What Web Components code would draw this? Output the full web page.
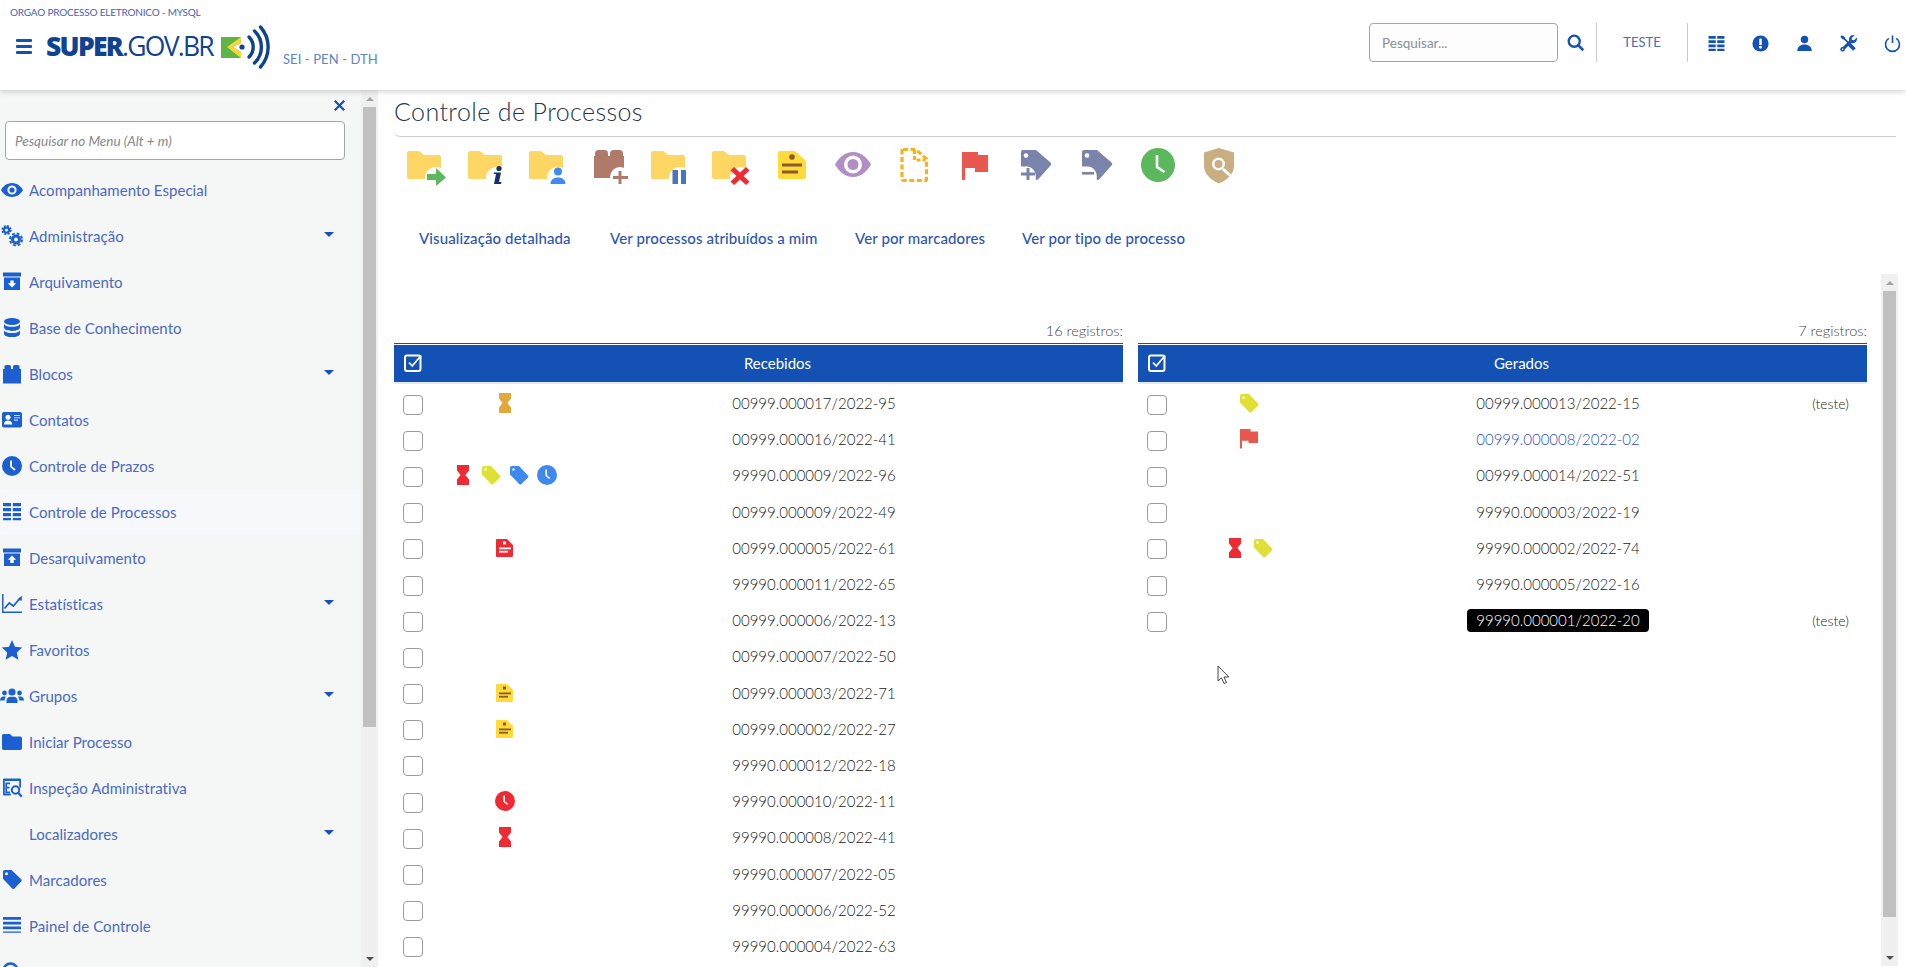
<!DOCTYPE html>
<html lang="pt-BR">
<head>
<meta charset="utf-8">
<title>Controle de Processos</title>
<style>
  html, body { margin: 0; height: 100%; background: #fff; overflow: hidden; }
  body { font-family: Lato, "Liberation Sans", sans-serif; color: #444; }
</style>
</head>
<body>
<app-shell>
  <app-header slot="header"></app-header>
  <app-sidebar slot="sidebar">
    <menu-item icon="eye">Acompanhamento Especial</menu-item>
    <menu-item icon="cogs" caret>Administração</menu-item>
    <menu-item icon="archive-down">Arquivamento</menu-item>
    <menu-item icon="database">Base de Conhecimento</menu-item>
    <menu-item icon="block" caret>Blocos</menu-item>
    <menu-item icon="card">Contatos</menu-item>
    <menu-item icon="clock">Controle de Prazos</menu-item>
    <menu-item icon="table" active>Controle de Processos</menu-item>
    <menu-item icon="archive-up">Desarquivamento</menu-item>
    <menu-item icon="chart" caret>Estatísticas</menu-item>
    <menu-item icon="star">Favoritos</menu-item>
    <menu-item icon="users" caret>Grupos</menu-item>
    <menu-item icon="folder">Iniciar Processo</menu-item>
    <menu-item icon="eq">Inspeção Administrativa</menu-item>
    <menu-item caret>Localizadores</menu-item>
    <menu-item icon="tag">Marcadores</menu-item>
    <menu-item icon="bars">Painel de Controle</menu-item>
    <menu-item icon="search"></menu-item>
  </app-sidebar>
  <main-panel slot="main">
    <process-table heading="Recebidos" total="16 registros:">
      <process-row marks="hour-orange">00999.000017/2022-95</process-row>
      <process-row>00999.000016/2022-41</process-row>
      <process-row marks="hour-red tag-yellow tag-blue clock-blue">99990.000009/2022-96</process-row>
      <process-row>00999.000009/2022-49</process-row>
      <process-row marks="note-red">00999.000005/2022-61</process-row>
      <process-row>99990.000011/2022-65</process-row>
      <process-row>00999.000006/2022-13</process-row>
      <process-row>00999.000007/2022-50</process-row>
      <process-row marks="note-yellow">00999.000003/2022-71</process-row>
      <process-row marks="note-yellow">00999.000002/2022-27</process-row>
      <process-row>99990.000012/2022-18</process-row>
      <process-row marks="clock-red">99990.000010/2022-11</process-row>
      <process-row marks="hour-red">99990.000008/2022-41</process-row>
      <process-row>99990.000007/2022-05</process-row>
      <process-row>99990.000006/2022-52</process-row>
      <process-row>99990.000004/2022-63</process-row>
    </process-table>
    <process-table heading="Gerados" total="7 registros:">
      <process-row marks="tag-yellow" note="(teste)">00999.000013/2022-15</process-row>
      <process-row marks="flag-red" kind="link">00999.000008/2022-02</process-row>
      <process-row>00999.000014/2022-51</process-row>
      <process-row>99990.000003/2022-19</process-row>
      <process-row marks="hour-red tag-yellow">99990.000002/2022-74</process-row>
      <process-row>99990.000005/2022-16</process-row>
      <process-row kind="hover" note="(teste)">99990.000001/2022-20</process-row>
    </process-table>
  </main-panel>
</app-shell>

<script>
// Icones desenhados a mao, todos em viewBox de 24 (menu), 16 (cabecalho) ou 40 (barra de acoes)
const FOLDER = '<path fill="#fdd663" d="M3 3h10l5 4h15a2 2 0 0 1 2 2v20a2 2 0 0 1-2 2H3a2 2 0 0 1-2-2V5a2 2 0 0 1 2-2z"/>';
const HOLE = '<circle cx="30" cy="30" r="11" fill="#fff"/>';
const TAG = c => `<path fill="${c}" d="M1 3a2 2 0 0 1 2-2h7l9 9.4a1.6 1.6 0 0 1 0 2.2L12.4 19a1.6 1.6 0 0 1-2.2 0L1 9.4z"/><circle cx="4.5" cy="4.5" r="1.2" fill="#fff"/>`;
const HOUR = c => `<path fill="${c}" d="M4 0h12v5.5L12.4 10 16 14.5V20H4v-5.5L7.6 10 4 5.5z"/>`;
const CLOCK = c => `<circle cx="10" cy="10" r="10" fill="${c}"/><path fill="none" stroke="#fff" stroke-width="1.6" d="M9.2 4.5v6l3.6 3"/>`;
const NOTE = (c, l) => `<path fill="${c}" d="M2 1h10l6 6v10.5a1.5 1.5 0 0 1-1.5 1.5h-15A1.5 1.5 0 0 1 1 17.5V2a1 1 0 0 1 1-1z"/><rect x="8" y="3.5" width="3" height="3" fill="${l}"/><rect x="4" y="9.5" width="12" height="1.8" fill="${l}"/><rect x="4" y="12.8" width="9" height="1.8" fill="${l}"/>`;
const TAGBODY = '<path fill="#7c83ab" d="M7 2h13l14.500 12.500a2 2 0 0 1 0 3L22 31.500c-1 .8-2.800.3-2.300-1 1-6-3-12-9-12H5V4a2 2 0 0 1 2-2z"/><circle cx="10" cy="7.500" r="2.300" fill="#fff"/>';

const ICONS = {
  // menu lateral
  eye: [24, '<path fill-rule="evenodd" fill="currentColor" d="M12 5C6.5 5 2.6 8.8 1 12c1.6 3.2 5.5 7 11 7s9.4-3.800 11-7c-1.600-3.200-5.500-7-11-7zm0 2.400a4.600 4.600 0 1 1 0 9.200 4.600 4.600 0 0 1 0-9.200z"/><circle cx="12" cy="12" r="2.600" fill="currentColor"/>'],
  cogs: [24, '<circle cx="6.500" cy="6" r="2.600" fill="none" stroke="currentColor" stroke-width="2.200"/><circle cx="6.500" cy="6" r="4.300" fill="none" stroke="currentColor" stroke-width="1.600" stroke-dasharray="2 1.380"/><circle cx="16" cy="15.500" r="3.500" fill="none" stroke="currentColor" stroke-width="3"/><circle cx="16" cy="15.500" r="6" fill="none" stroke="currentColor" stroke-width="2" stroke-dasharray="2.800 1.910"/>'],
  'archive-down': [24, `<rect x="3" y="2.500" width="18" height="4" fill="currentColor"/><rect x="4" y="7.500" width="16" height="12.500" fill="currentColor"/><path fill="#fff" d="M12 17.500 7.800 13.200h2.500V10.500h3.400v2.700h2.500z"/>`],
  'archive-up': [24, `<rect x="3" y="2.500" width="18" height="4" fill="currentColor"/><rect x="4" y="7.500" width="16" height="12.500" fill="currentColor"/><path fill="#fff" d="M12 9.500 7.800 13.800h2.500v3.200h3.400v-3.200h2.500z"/>`],
  database: [24, '<ellipse cx="12" cy="5.500" rx="8" ry="3.400" fill="currentColor"/><path fill="currentColor" d="M4 8.200c1.500 1.800 4.500 2.600 8 2.600s6.500-.8 8-2.600v3.300c0 1.900-3.600 3.400-8 3.400s-8-1.500-8-3.400z"/><path fill="currentColor" d="M4 14.400c1.500 1.800 4.500 2.600 8 2.600s6.500-.8 8-2.600v3.300c0 1.900-3.600 3.400-8 3.400s-8-1.500-8-3.400z"/>'],
  block: [24, '<rect x="3" y="7" width="18" height="14.500" fill="currentColor"/><rect x="4.500" y="3" width="6.500" height="6" rx="1.600" fill="currentColor"/><rect x="13" y="3" width="6.500" height="6" rx="1.600" fill="currentColor"/>'],
  card: [24, '<rect x="2" y="4" width="20" height="15.500" rx="1.800" fill="currentColor"/><circle cx="8" cy="9.300" r="2.500" fill="#fff"/><path fill="#fff" d="M3.800 16.500c0-2.500 1.900-4 4.200-4s4.200 1.500 4.200 4z"/><path stroke="#fff" stroke-opacity=".75" stroke-width="1.100" d="M14 7.500h6M14 9.800h6M14 12.100h4"/>'],
  clock: [24, '<circle cx="12" cy="12" r="10" fill="currentColor"/><path fill="none" stroke="#fff" stroke-width="1.800" d="M11 6.500v6.200l4 3.300"/>'],
  table: [24, '<path fill="currentColor" d="M3 3h8v3.200H3zM12.800 3H21v3.200h-8.200zM3 8h8v3.200H3zM12.800 8H21v3.200h-8.200zM3 13h8v3.200H3zM12.800 13H21v3.200h-8.200zM3 18h8v2.200H3zM12.800 18H21v2.200h-8.200z"/>'],
  chart: [24, '<path fill="none" stroke="currentColor" stroke-width="1.500" d="M2.800 2v18.300H22"/><path fill="none" stroke="currentColor" stroke-width="1.700" d="M4.500 16.500l4.800-5.500 4 3 7.500-8.500"/><path fill="currentColor" d="M21.800 3.800v5l-4.600-1z"/>'],
  star: [24, '<path fill="currentColor" d="M12 2l3 6.800 7.200.8-5.400 4.900 1.600 7.200L12 18l-6.400 3.700 1.600-7.200L1.800 9.600 9 8.800z"/>'],
  users: [24, '<circle cx="12" cy="8" r="3.600" fill="currentColor"/><circle cx="4.500" cy="9" r="2.400" fill="currentColor"/><circle cx="19.500" cy="9" r="2.400" fill="currentColor"/><path fill="currentColor" d="M6.500 19v-2.500c0-2.200 1.900-3.800 3.800-3.800h3.400c1.900 0 3.800 1.600 3.800 3.800V19z"/><path fill="currentColor" d="M0 16.500c0-2.500 1.600-4 3.500-4h2l.5.300c-1 1-1.300 2-1.300 3.700zM24 16.500c0-2.500-1.600-4-3.500-4h-2l-.5.300c1 1 1.300 2 1.300 3.700z"/>'],
  folder: [24, '<path fill="currentColor" d="M3.500 4H10l2.500 2.500h8A1.800 1.800 0 0 1 22 8.300v10a1.800 1.800 0 0 1-1.800 1.800H3.800A1.800 1.800 0 0 1 2 18.300V5.500A1.500 1.500 0 0 1 3.500 4z"/>'],
  eq: [24, '<path fill-rule="evenodd" fill="currentColor" d="M4 2.500h16a1 1 0 0 1 1 1v8h-1.800V5H4.800v12.500h6v2H4a1 1 0 0 1-1-1v-15a1 1 0 0 1 1-1z"/><path stroke="currentColor" stroke-width="1.700" fill="none" d="M10 7.300H6.200v9H10M6.200 11.700h3.300"/><circle cx="15.500" cy="14" r="3.700" fill="none" stroke="currentColor" stroke-width="2"/><path stroke="currentColor" stroke-width="2.200" d="M18.200 16.800l3.600 4"/>'],
  tag: [24, '<path fill="currentColor" d="M3 3.800A1.800 1.800 0 0 1 4.800 2h6.700l9.700 9.300a1.600 1.600 0 0 1 0 2.300l-6.700 6.800a1.600 1.600 0 0 1-2.300 0L3 10.800z"/><circle cx="6.500" cy="5.700" r="1.500" fill="#f5f7f7"/>'],
  bars: [24, '<path fill="currentColor" d="M3 3h18v2.700H3zM3 7.800h18v2.700H3zM3 12.600h18v2.700H3zM3 17.500h18v1.300H3z"/>'],
  search: [24, '<circle cx="10.500" cy="10.500" r="7" fill="none" stroke="currentColor" stroke-width="2.600"/><path stroke="currentColor" stroke-width="3" d="M15.500 15.500l6 6"/>'],
  // cabecalho
  power: [16, '<path fill="none" stroke="currentColor" stroke-width="1.500" d="M4.500 3.200a6.600 6.600 0 1 0 7 0M8 .5v7"/>'],
  alert: [16, '<circle cx="8" cy="8" r="7.600" fill="currentColor"/><rect x="6.800" y="3.400" width="2.400" height="6" rx=".8" fill="#fff"/><circle cx="8" cy="11.500" r="1.400" fill="#fff"/>'],
  user: [16, '<circle cx="8" cy="4.300" r="3.500" fill="currentColor"/><path fill="currentColor" d="M1.200 15c0-3.800 2.800-6 6.800-6s6.800 2.200 6.800 6z"/>'],
  tools: [16, '<path fill="none" stroke="currentColor" stroke-width="1.600" d="M2 1.500 8 7.500"/><path fill="currentColor" d="M.3 1.700 1.800.3 4.800 2.300 3.800 4 2.300 3.900z"/><path fill="none" stroke="currentColor" stroke-width="3.400" d="M8.800 8.800l4.800 4.800"/><path fill="none" stroke="currentColor" stroke-width="2.800" d="M2.500 13.500l7.500-7.500"/><circle cx="2.500" cy="13.500" r="2.200" fill="currentColor"/><circle cx="2.500" cy="13.500" r=".8" fill="#fff"/><path fill="currentColor" d="M8.400 4.600A4.200 4.200 0 0 1 13.700.2l-2.700 2.600.3 1.900 1.900.3L15.800 2.300A4.200 4.200 0 0 1 11 7.700z"/>'],
  grid: [16, '<path fill="currentColor" d="M.500 1h6.800v2.500H.500zM8.700 1h6.800v2.500H8.700zM.500 5h6.800v2.500H.500zM8.700 5h6.800v2.500H8.700zM.500 9h6.800v2.500H.500zM8.700 9h6.800v2.500H8.700zM.500 13h6.800v2H.500zM8.700 13h6.800v2H8.700z"/>'],
  magnifier: [16, '<circle cx="6.800" cy="6.800" r="5.200" fill="none" stroke="currentColor" stroke-width="2.200"/><path stroke="currentColor" stroke-width="2.400" d="M10.500 10.500l4.800 4.800"/>'],
  // barra de acoes
  'a-send': [40, FOLDER + HOLE + '<path fill="#5cb85c" d="M21 26h9v-6l10 9.500L30 38v-6h-9z"/>'],
  'a-info': [40, FOLDER + HOLE + '<circle cx="32" cy="20.500" r="2.600" fill="#15306e"/><path fill="#15306e" d="M27 24.500h7l-2 9.500h2.500l-.5 2h-7l2-10h-2.500z"/>'],
  'a-user': [40, FOLDER + HOLE + '<circle cx="30" cy="23.500" r="4" fill="#3f8bf0"/><path fill="#3f8bf0" d="M22.500 36c0-4 3-6.500 7.500-6.500s7.500 2.500 7.500 6.500z"/>'],
  'a-block': [40, '<rect x="5" y="8" width="30" height="22" fill="#b07a6b"/><rect x="6" y="2" width="13" height="10" rx="3.500" fill="#b07a6b"/><rect x="21" y="2" width="13" height="10" rx="3.500" fill="#b07a6b"/><circle cx="31" cy="29" r="10" fill="#fff"/><path fill="#b07a6b" d="M29.500 23h3v5h6.500v3h-6.500v5h-3v-5H24v-3h5.500z"/>'],
  'a-pause': [40, FOLDER + HOLE + '<rect x="22.500" y="22" width="5.500" height="14" fill="#4a74bc"/><rect x="31" y="22" width="5" height="14" fill="#4a74bc"/>'],
  'a-close': [40, FOLDER + HOLE + '<path fill="#ee2a32" d="M23 21l6 5.500L35 21l3.500 3.500-6 5.500 6 5.500L35 39l-6-5.500L23 39l-3.500-3.500 6-5.500-6-5.500z" transform="translate(0 -2)"/>'],
  'a-note': [40, '<path fill="#fedb3a" d="M8 3h15l11 10v16a2 2 0 0 1-2 2H8a2 2 0 0 1-2-2V5a2 2 0 0 1 2-2z"/><circle cx="20" cy="9" r="2.800" fill="#8a5a2b"/><rect x="10" y="15.500" width="20" height="3" fill="#8a5a2b"/><rect x="10" y="22.500" width="16" height="3" fill="#8a5a2b"/>'],
  'a-eye': [40, '<path fill="#b18fc6" d="M20 4C11 4 5 11 2 16.500 5 22 11 29 20 29s15-7 18-12.500C35 11 29 4 20 4z"/><circle cx="20" cy="16.500" r="9" fill="#fff"/><circle cx="20" cy="16.500" r="5.500" fill="#b18fc6"/>'],
  'a-dashed': [40, '<path fill="none" stroke="#f5b21e" stroke-width="3.200" stroke-dasharray="5 2.500" d="M9 1.500h13l10.500 9.500v20a1.500 1.500 0 0 1-1.500 1.500H9.500A1.500 1.500 0 0 1 8 31V2.500z"/><path fill="none" stroke="#f5b21e" stroke-width="3.200" stroke-dasharray="4 2" d="M20.500 2v10h11"/>'],
  'a-flag': [40, '<path fill="#e8584f" d="M7 4h3.200v28H7z"/><path fill="#e8584f" d="M7 4h16v3h10v17H20v-4H7z"/>'],
  'a-tagplus': [40, TAGBODY + '<path fill="#7c83ab" d="M10.500 20h3v4.500H19v3h-5.500V32h-3v-4.500H5v-3h5.500z"/>'],
  'a-tagminus': [40, TAGBODY + '<rect x="5" y="24" width="12" height="2.600" fill="#7c83ab"/>'],
  'a-clock': [40, '<circle cx="20" cy="17" r="17" fill="#5cb85c"/><path fill="none" stroke="#fff" stroke-width="2.600" d="M19 7v12l7.500 5"/>'],
  'a-shield': [40, '<path fill="#c9ae82" d="M20 0l15 4.500v13c0 8-6 14-15 18C11 31.500 5 25.500 5 17.500v-13z"/><circle cx="19.500" cy="16" r="6.500" fill="#fff"/><circle cx="19.500" cy="16" r="4" fill="#c9ae82"/><path stroke="#fff" stroke-width="3" d="M24 21l7 6.500"/>'],
  // marcas das linhas
  'hour-orange': [20, HOUR('#e3a73a')],
  'hour-red': [20, HOUR('#ef2a33')],
  'tag-yellow': [20, TAG('#dfdf35')],
  'tag-blue': [20, TAG('#3f88ee')],
  'clock-blue': [20, CLOCK('#3f88ee')],
  'clock-red': [20, CLOCK('#ef2a33')],
  'note-red': [20, NOTE('#ef2a33', '#fff')],
  'note-yellow': [20, NOTE('#fedb3a', '#8a5a2b')],
  'flag-red': [20, '<path fill="#e8584f" d="M1 0h2v19.500H1z"/><path fill="#e8584f" d="M1 0h10.500v2.500H19V14H9.500v-2.200H1z"/>'],
  check: [18, '<rect x="1" y="1.500" width="15.500" height="15.500" rx="2" fill="none" stroke="#fff" stroke-width="2"/><path fill="none" stroke="#fff" stroke-width="1.800" d="M5 8.500l3.200 3.500L17.200 1.500"/>']
};

class SeiIcon extends HTMLElement {
  connectedCallback() {
    const name = this.getAttribute('name');
    const size = this.getAttribute('size') || 24;
    const [box, body] = ICONS[name] || [24, ''];
    this.attachShadow({ mode: 'open' }).innerHTML = `
      <style>
        :host { display: block; width: ${size}px; height: ${size}px; flex: none; }
        svg { display: block; overflow: visible; }
      </style>
      <svg width="${size}" height="${size}" viewBox="0 0 ${box} ${box}" aria-hidden="true">${body}</svg>`;
  }
}
customElements.define('sei-icon', SeiIcon);

class AppShell extends HTMLElement {
  constructor() {
    super();
    this.attachShadow({ mode: 'open' }).innerHTML = `
      <style>
        :host {
          display: grid;
          grid-template: 90px 877px / 378px 1fr;
          height: 967px;
          overflow: hidden;
        }
        ::slotted([slot=header]) { grid-column: 1 / 3; }
      </style>
      <slot name="header"></slot>
      <slot name="sidebar"></slot>
      <slot name="main"></slot>`;
  }
}
customElements.define('app-shell', AppShell);

class AppHeader extends HTMLElement {
  constructor() {
    super();
    this.attachShadow({ mode: 'open' }).innerHTML = `
      <style>
        :host {
          display: flex;
          justify-content: space-between;
          background: #fff;
          box-shadow: 0 1px 6px rgba(0,0,0,.22);
          position: relative;
          z-index: 2;
          color: #1351b4;
        }
        .left { padding: 6px 0 0 10px; }
        .org { font-size: 10px; line-height: 13px; color: #4a5eb2; letter-spacing: -.2px; }
        .brand { display: flex; margin-top: 6px; }
        .menu { width: 16px; margin: 14px 14px 0 6px; }
        .menu i { display: block; height: 2.500px; margin-bottom: 3.500px; background: #1351b4; border-radius: 1px; }
        .logo {
          display: flex; align-items: center; height: 43px;
          font: 400 26.5px/1 "Open Sans", sans-serif;
          color: #0f4391; letter-spacing: -1.750px;
        }
        .logo b { font-weight: 800; letter-spacing: -1.700px; }
        .logo svg { margin-left: 8px; }
        .sub { font-size: 13px; color: #5a86c8; margin: 26px 0 0 12px; letter-spacing: .1px; }
        .right { display: flex; align-items: flex-start; padding-top: 23px; }
        .search {
          box-sizing: border-box; width: 189px; height: 39px; margin: 0;
          border: 1px solid #a5a5a5; border-radius: 4px; background: #fdfdfd;
          font: 400 13.500px "Lato", sans-serif; padding: 0 12px;
        }
        .search::placeholder { color: #8a8f98; }
        .go { margin: 11px 12px 0 9px; }
        .user {
          width: 92px; height: 39px; box-sizing: border-box;
          border: solid #c9c9c9; border-width: 0 1px;
          text-align: center; font-size: 13px; line-height: 38px; color: #4a6cb8;
        }
        .tools { display: flex; gap: 27px; padding: 12px 5px 0 20px; }
      </style>
      <div class="left">
        <div class="org">ORGAO PROCESSO ELETRONICO - MYSQL</div>
        <div class="brand">
          <div class="menu"><i></i><i></i><i></i></div>
          <div class="logo"><b>SUPER</b>.GOV.BR
            <svg width="50" height="44" viewBox="0 0 50 44" aria-hidden="true">
              <path fill="#5cb544" d="M0 12h20v6l-8 4 8 5v6H0z"/>
              <path fill="#f5d63d" d="M20 12v6l-8 4 8 5v6l-14-11z"/>
              <circle cx="21" cy="22" r="2.600" fill="#0f4391"/>
              <g fill="none" stroke="#0f4391" stroke-width="3.400" stroke-linecap="round">
                <path d="M28 12a14 14 0 0 1 0 20"/>
                <path d="M33.500 6a22 22 0 0 1 0 32"/>
                <path d="M39.500 2a30 30 0 0 1 0 40"/>
              </g>
            </svg>
          </div>
          <div class="sub">SEI - PEN - DTH</div>
        </div>
      </div>
      <div class="right">
        <input class="search" placeholder="Pesquisar...">
        <sei-icon class="go" name="magnifier" size="17"></sei-icon>
        <div class="user">TESTE</div>
        <div class="tools">
          <sei-icon name="grid" size="17"></sei-icon>
          <sei-icon name="alert" size="17"></sei-icon>
          <sei-icon name="user" size="17"></sei-icon>
          <sei-icon name="tools" size="17"></sei-icon>
          <sei-icon name="power" size="17"></sei-icon>
        </div>
      </div>`;
  }
}
customElements.define('app-header', AppHeader);

class FakeScrollbar extends HTMLElement {
  constructor() {
    super();
    this.attachShadow({ mode: 'open' }).innerHTML = `
      <style>
        :host {
          display: flex; flex-direction: column; align-items: center;
          width: 17px; background: #f0f0f0; flex: none; box-sizing: border-box;
        }
        .up, .down { height: 17px; flex: none; display: flex; align-items: center; justify-content: center; }
        .up i { border: solid transparent; border-width: 0 4px 4px; border-bottom-color: #a3a3a3; }
        .down i { border: solid transparent; border-width: 4px 4px 0; border-top-color: #505050; }
        .thumb { width: 13px; background: #c0c0c0; height: var(--thumb, 300px); }
        .fill { flex: 1; }
      </style>
      <div class="up"><i></i></div>
      <div class="thumb"></div>
      <div class="fill"></div>
      <div class="down"><i></i></div>`;
  }
}
customElements.define('fake-scrollbar', FakeScrollbar);

class AppSidebar extends HTMLElement {
  constructor() {
    super();
    this.attachShadow({ mode: 'open' }).innerHTML = `
      <style>
        :host {
          display: flex; background: #f5f7f7; overflow: hidden;
          color: #1b5fd0; --thumb: 620px;
        }
        .col { width: 361px; flex: none; overflow: hidden; position: relative; }
        .close { display: flex; justify-content: flex-end; height: 31px; padding: 10px 16px 0 0; box-sizing: border-box; }
        .close svg { display: block; }
        .find {
          display: block; box-sizing: border-box; width: 340px; height: 39px; margin: 0 0 7px 5px;
          border: 1px solid #a5a5a5; border-radius: 4px; background: #fff; padding: 0 9px;
          font: italic 400 13.500px "Lato", sans-serif;
        }
        .find::placeholder { color: #85878a; }
        fake-scrollbar { height: 877px; }
      </style>
      <div class="col">
        <div class="close">
          <svg width="11" height="11" viewBox="0 0 11 11"><path stroke="#1b4fa8" stroke-width="2.200" d="M.8.8l9.400 9.400M10.200.8.8 10.200"/></svg>
        </div>
        <input class="find" placeholder="Pesquisar no Menu (Alt + m)">
        <slot></slot>
      </div>
      <fake-scrollbar></fake-scrollbar>`;
  }
}
customElements.define('app-sidebar', AppSidebar);

class MenuItem extends HTMLElement {
  connectedCallback() {
    const icon = this.getAttribute('icon');
    const active = this.hasAttribute('active');
    this.attachShadow({ mode: 'open' }).innerHTML = `
      <style>
        :host {
          display: flex; align-items: center; height: 46px; box-sizing: border-box;
          color: #1b5fd0;
          ${active ? 'background: #f6f8fb; border-radius: 4px;' : ''}
        }
        .ico { width: 24px; margin-right: 5px; flex: none; height: 24px; }
        .txt { flex: 1; font-size: 15px; color: #4a69c6; letter-spacing: .05px; }
        .caret {
          width: 0; height: 0; margin: 0 27px 4px 0;
          border: solid transparent; border-width: 5px 5.500px 0; border-top-color: #1b4fc0;
        }
      </style>
      <div class="ico">${icon ? `<sei-icon name="${icon}" size="24"></sei-icon>` : ''}</div>
      <div class="txt"><slot></slot></div>
      ${this.hasAttribute('caret') ? '<div class="caret"></div>' : ''}`;
  }
}
customElements.define('menu-item', MenuItem);

class ActionBar extends HTMLElement {
  constructor() {
    super();
    const names = ['send', 'info', 'user', 'block', 'pause', 'close', 'note', 'eye', 'dashed', 'flag', 'tagplus', 'tagminus', 'clock', 'shield'];
    this.attachShadow({ mode: 'open' }).innerHTML = `
      <style>
        :host { display: flex; padding-left: 1px; height: 40px; }
        a { display: flex; width: 61px; justify-content: center; }
      </style>
      ${names.map(n => `<a><sei-icon name="a-${n}" size="40"></sei-icon></a>`).join('')}`;
  }
}
customElements.define('action-bar', ActionBar);

class ViewTabs extends HTMLElement {
  constructor() {
    super();
    this.attachShadow({ mode: 'open' }).innerHTML = `
      <style>
        :host {
          display: grid; grid-template-columns: 191px 245px 167px auto; justify-content: start;
          padding-left: 25px; font-size: 15px; line-height: 18px; color: #2b55b5; font-weight: 500;
          letter-spacing: .1px; margin-top: -1px;
        }
      </style>
      <span>Visualização detalhada</span>
      <span>Ver processos atribuídos a mim</span>
      <span>Ver por marcadores</span>
      <span>Ver por tipo de processo</span>`;
  }
}
customElements.define('view-tabs', ViewTabs);

class MainPanel extends HTMLElement {
  constructor() {
    super();
    this.attachShadow({ mode: 'open' }).innerHTML = `
      <style>
        :host { display: flex; flex-direction: column; height: 877px; overflow: hidden; background: #fff; }
        .head { padding: 0 10px 0 16px; }
        h1 {
          margin: 0; font-weight: 300; font-size: 25px; line-height: 43px; height: 47px;
          color: #26364a; box-sizing: border-box; border-bottom: 1px solid #cfcfcf; border-radius: 0 0 0 6px;
          letter-spacing: .4px;
        }
        action-bar { margin-top: 11px; }
        view-tabs { margin-top: 41px; }
        .body { flex: 1; display: flex; min-height: 0; margin-top: 27px; position: relative; --thumb: 626px; }
        .tables { flex: none; width: 1503px; padding: 48px 0 0 16px; box-sizing: border-box; display: grid; grid-template-columns: 729px 729px; column-gap: 15px; align-items: start; }
        fake-scrollbar { height: 692px; }
        .cursor { position: absolute; left: 839px; top: 391px; }
      </style>
      <div class="head">
        <h1>Controle de Processos</h1>
        <action-bar></action-bar>
        <view-tabs></view-tabs>
      </div>
      <div class="body">
        <div class="tables"><slot></slot></div>
        <fake-scrollbar></fake-scrollbar>
        <svg class="cursor" width="14" height="20" viewBox="0 0 14 20"><path fill="#fff" stroke="#333" stroke-width=".9" d="M1 1v15l3.500-3.200 2.500 5.700 2.500-1-2.500-5.500h4.800z"/></svg>
      </div>`;
  }
}
customElements.define('main-panel', MainPanel);

class ProcessTable extends HTMLElement {
  connectedCallback() {
    this.attachShadow({ mode: 'open' }).innerHTML = `
      <style>
        :host { display: block; }
        .total { text-align: right; font-size: 14.500px; line-height: 18px; color: #444; font-weight: 300; }
        .rule { margin-top: 3px; border-top: 1.500px solid #3f5a00; padding-top: .5px; }
        .bar {
          display: grid; grid-template-columns: 38px 1fr; align-items: center;
          height: 37px; background: #1351b4; border-bottom: 2px solid #e4eaf4; color: #fff; box-sizing: content-box;
        }
        .bar sei-icon { margin-left: 10px; }
        .bar span { text-align: center; font-size: 15px; }
        .rows { padding-top: 3px; }
      </style>
      <div class="total">${this.getAttribute('total')}</div>
      <div class="rule">
        <div class="bar"><sei-icon name="check" size="18"></sei-icon><span>${this.getAttribute('heading')}</span></div>
      </div>
      <div class="rows"><slot></slot></div>`;
  }
}
customElements.define('process-table', ProcessTable);

class ProcessRow extends HTMLElement {
  connectedCallback() {
    const marks = (this.getAttribute('marks') || '').split(' ').filter(Boolean);
    const kind = this.getAttribute('kind');
    const numStyle = kind === 'link' ? 'color:#2b4fc0;'
      : kind === 'hover' ? 'color:#fff;background:#000;border-radius:4px;padding:2px 9px;' : '';
    this.attachShadow({ mode: 'open' }).innerHTML = `
      <style>
        :host {
          display: grid; grid-template-columns: 38px 146px 472px 1fr; align-items: center;
          height: 36.2px; font-size: 15px; font-weight: 300; color: #222;
        }
        input {
          appearance: none; -webkit-appearance: none; margin: 0 0 0 9px; width: 20px; height: 20px;
          border: 1.500px solid #9c9c9c; border-radius: 4px; background: #fff; box-sizing: border-box;
        }
        .marks { display: flex; justify-content: center; gap: 8px; margin-top: -3px; }
        .num { text-align: center; margin-top: -2px; }
        .num span { display: inline-block; line-height: 19px; ${numStyle} }
        .note { text-align: center; font-size: 14px; margin-top: -3px; }
      </style>
      <input type="checkbox" aria-label="Selecionar">
      <div class="marks">${marks.map(m => `<sei-icon name="${m}" size="20"></sei-icon>`).join('')}</div>
      <div class="num"><span><slot></slot></span></div>
      <div class="note">${this.getAttribute('note') || ''}</div>`;
  }
}
customElements.define('process-row', ProcessRow);
</script>
</body>
</html>
